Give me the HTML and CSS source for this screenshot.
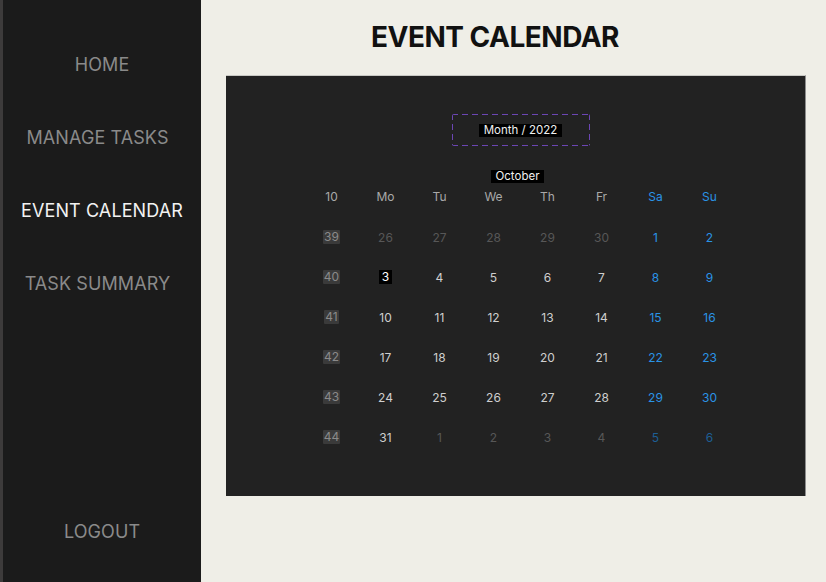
FILE: index.html
```html
<!DOCTYPE html>
<html>
<head>
<meta charset="utf-8">
<link rel="stylesheet" href="styles.css">
</head>
<body>
<div class="app">
  <aside class="sidebar">
    <nav class="nav">
      <a class="nav-item">HOME</a>
      <a class="nav-item shift">MANAGE TASKS</a>
      <a class="nav-item active">EVENT CALENDAR</a>
      <a class="nav-item shift">TASK SUMMARY</a>
    </nav>
    <a class="nav-item logout">LOGOUT</a>
  </aside>
  <main class="main">
    <h1 class="title">EVENT CALENDAR</h1>
    <section class="panel">
      <div class="calendar">
        <div class="picker"><span class="tag">Month / 2022</span></div>
        <div class="month"><span class="tag">October</span></div>
        <div class="row head">
          <span class="cell">10</span><span class="cell">Mo</span><span class="cell">Tu</span><span class="cell">We</span><span class="cell">Th</span><span class="cell">Fr</span><span class="cell we">Sa</span><span class="cell we">Su</span>
        </div>
        <div class="weeks">
          <div class="row"><span class="cell"><span class="wk">39</span></span><span class="cell out">26</span><span class="cell out">27</span><span class="cell out">28</span><span class="cell out">29</span><span class="cell out">30</span><span class="cell we">1</span><span class="cell we">2</span></div>
          <div class="row"><span class="cell"><span class="wk">40</span></span><span class="cell"><span class="today">3</span></span><span class="cell">4</span><span class="cell">5</span><span class="cell">6</span><span class="cell">7</span><span class="cell we">8</span><span class="cell we">9</span></div>
          <div class="row"><span class="cell"><span class="wk">41</span></span><span class="cell">10</span><span class="cell">11</span><span class="cell">12</span><span class="cell">13</span><span class="cell">14</span><span class="cell we">15</span><span class="cell we">16</span></div>
          <div class="row"><span class="cell"><span class="wk">42</span></span><span class="cell">17</span><span class="cell">18</span><span class="cell">19</span><span class="cell">20</span><span class="cell">21</span><span class="cell we">22</span><span class="cell we">23</span></div>
          <div class="row"><span class="cell"><span class="wk">43</span></span><span class="cell">24</span><span class="cell">25</span><span class="cell">26</span><span class="cell">27</span><span class="cell">28</span><span class="cell we">29</span><span class="cell we">30</span></div>
          <div class="row"><span class="cell"><span class="wk">44</span></span><span class="cell">31</span><span class="cell out">1</span><span class="cell out">2</span><span class="cell out">3</span><span class="cell out">4</span><span class="cell we out">5</span><span class="cell we out">6</span></div>
        </div>
      </div>
    </section>
  </main>
</div>
</body>
</html>
```
FILE: styles.css
```css
* { box-sizing: border-box; }
html, body { margin: 0; padding: 0; }
body {
  font-family: Inter, "Noto Sans", sans-serif;
  background: #efeee7;
  width: 826px;
  height: 582px;
  overflow: hidden;
}
.app {
  display: flex;
  height: 582px;
}
.sidebar {
  width: 201px;
  flex: none;
  background: #1b1b1b;
  border-left: 3px solid #3d3b3b;
  display: flex;
  flex-direction: column;
  padding: 28px 0 14px;
}
.nav {
  display: flex;
  flex-direction: column;
}
.nav-item {
  display: flex;
  align-items: center;
  justify-content: center;
  height: 73px;
  font-size: 18px;
  color: #8a8a8a;
  letter-spacing: 0.1px;
  white-space: nowrap;
}
.nav-item.shift { padding-right: 9px; }
.nav-item.active { color: #f2f2f2; }
.logout { margin-top: auto; }
.main {
  flex: 1;
  display: flex;
  flex-direction: column;
  padding: 0 20px 0 25px;
}
.title {
  margin: 0;
  height: 75px;
  padding: 20px 42px 0 0;
  text-align: center;
  font-size: 28px;
  font-weight: 700;
  line-height: 34px;
  color: #111;
  letter-spacing: -0.5px;
}
.panel {
  width: 580px;
  height: 421px;
  background: #222222;
  border-top: 1px solid #c8c8c4;
  border-right: 1px solid #8d8d8d;
  padding: 38px 0 0 10px;
}
.calendar {
  width: 432px;
  margin: 0 auto;
  display: flex;
  flex-direction: column;
  align-items: center;
}
.picker {
  width: 138px;
  height: 32px;
  border-radius: 2px;
  display: flex;
  align-items: center;
  justify-content: center;
  background:
    repeating-linear-gradient(90deg, #6c46b4 0 6px, transparent 6px 10px) top / 100% 1px no-repeat,
    repeating-linear-gradient(90deg, #6c46b4 0 6px, transparent 6px 10px) bottom / 100% 1px no-repeat,
    repeating-linear-gradient(180deg, #6c46b4 0 6px, transparent 6px 10px) left / 1px 100% no-repeat,
    repeating-linear-gradient(180deg, #6c46b4 0 6px, transparent 6px 10px) right / 1px 100% no-repeat;
}
.tag {
  background: #000;
  color: #f0f0f0;
  font-size: 11.5px;
  line-height: 13px;
  padding: 0 5px;
}
.month {
  margin-top: 24px;
  margin-right: 6px;
  height: 12px;
  display: flex;
  align-items: center;
  justify-content: center;
}
.row {
  width: 432px;
  display: grid;
  grid-template-columns: repeat(8, 54px);
  height: 40px;
}
.row.head {
  height: 28px;
  margin-bottom: 7px;
}
.cell {
  display: flex;
  align-items: center;
  justify-content: center;
  font-size: 12px;
  color: #cfcfcf;
}
.head .cell { color: #a9a9a9; }
.cell.out { color: #575757; }
.cell.we, .head .cell.we { color: #2a93e6; }
.cell.we.out { color: #1d5f95; }
.wk {
  background: #3a3a3a;
  color: #8a8a8a;
  padding: 0 1px;
  line-height: 14px;
  border-radius: 1px;
}
.today {
  background: #000;
  color: #fff;
  padding: 0 3px;
  line-height: 14px;
}
```
